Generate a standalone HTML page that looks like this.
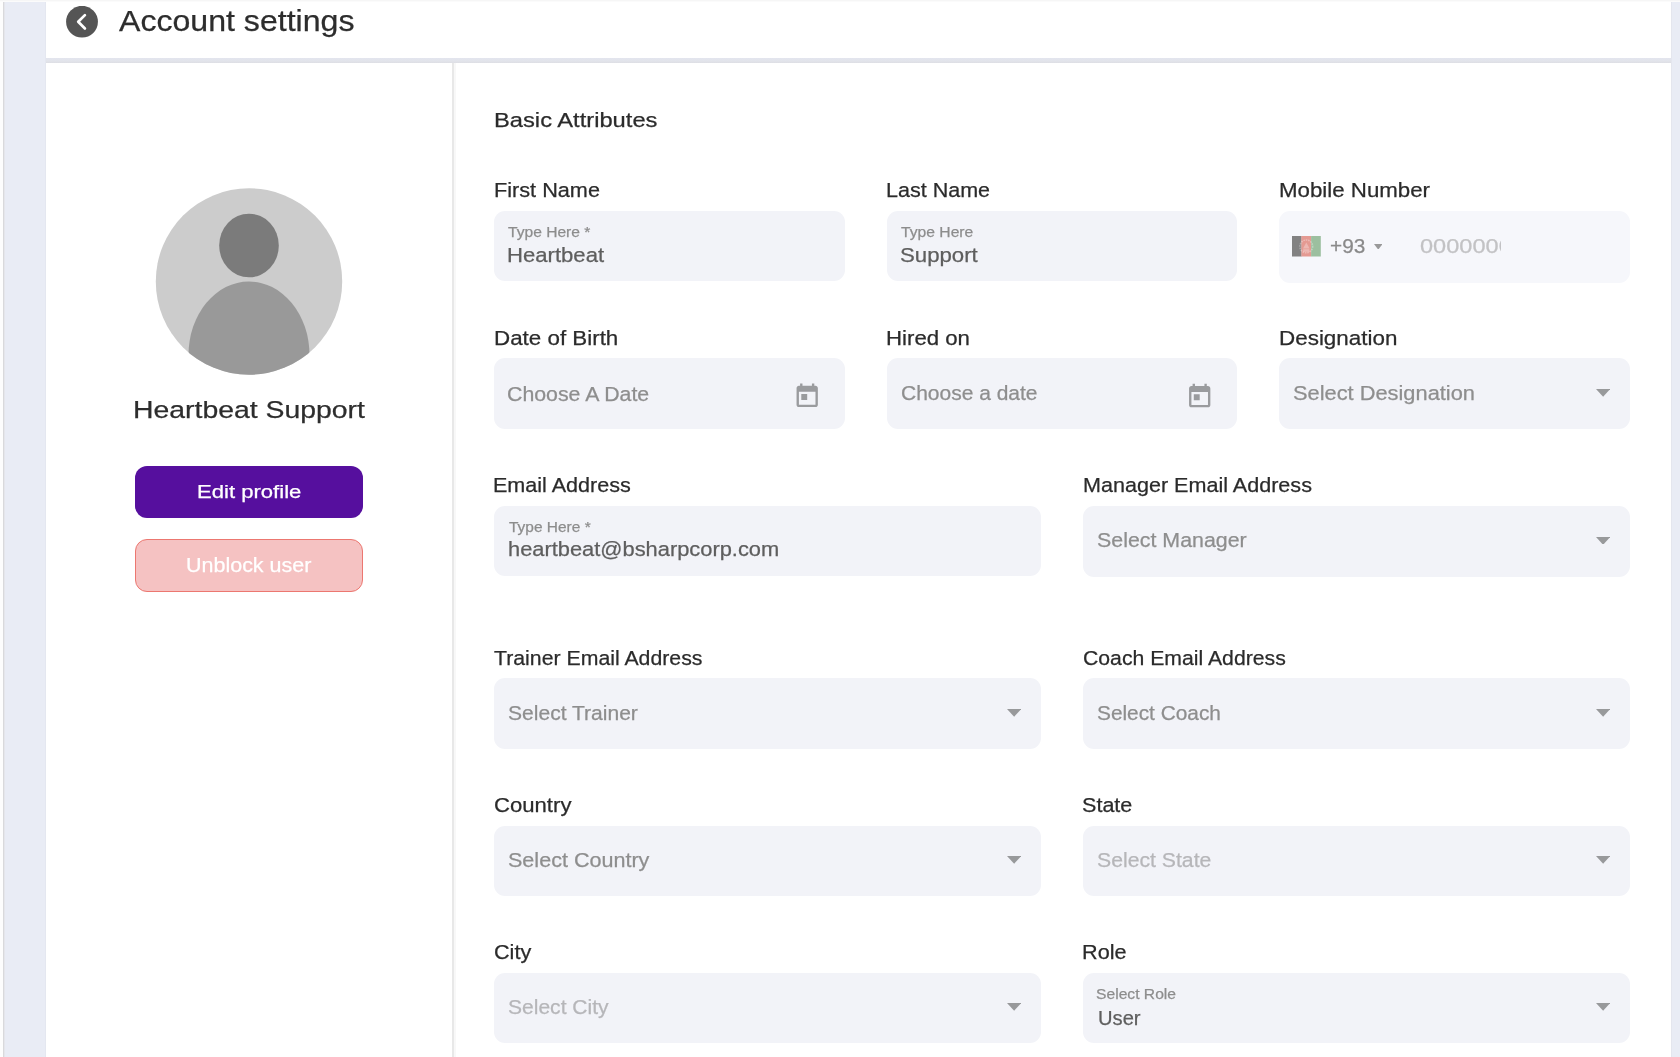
<!DOCTYPE html>
<html><head><meta charset="utf-8">
<style>
*{box-sizing:border-box;margin:0;padding:0}
html,body{width:1680px;height:1057px;overflow:hidden}
body{position:relative;background:#e9ecf5;font-family:"Liberation Sans",sans-serif;color:#2b2b2b}
.abs{position:absolute}
.t{position:absolute;white-space:nowrap;line-height:1;transform-origin:0 0;will-change:transform;-webkit-text-stroke:0.25px currentColor}
.box{position:absolute;border-radius:11px}
</style></head><body>
<div class="abs" style="left:0;top:0;width:3px;height:1057px;background:#fdfdfd"></div>
<div class="abs" style="left:3px;top:0;width:1px;height:1057px;background:#d9d9dc"></div><div class="abs" style="left:4px;top:0;width:1px;height:1057px;background:#e5e6eb"></div><div class="abs" style="left:45px;top:0;width:1px;height:1057px;background:#e4e7f0"></div><div class="abs" style="left:1671px;top:0;width:1px;height:1057px;background:#e4e6ee"></div>
<div class="abs" style="left:0;top:0;width:1680px;height:1px;background:#f6f6f6"></div><div class="abs" style="left:0;top:1px;width:1680px;height:1px;background:#fbfbfb"></div>
<div class="abs" style="left:46px;top:2px;width:1625px;height:56px;background:#fff"></div>
<div class="abs" style="left:46px;top:58px;width:1625px;height:5px;background:linear-gradient(#e3e5ee,#e2e4eb 60%,#dddee4)"></div>
<div class="abs" style="left:46px;top:63px;width:1625px;height:994px;background:#fff"></div>
<div class="abs" style="left:452px;top:63px;width:2px;height:994px;background:#e8e8e8"></div><div class="abs" style="left:454px;top:63px;width:2px;height:994px;background:#f8f8f8"></div>

<div class="box" style="left:494px;top:210.5px;width:350.7px;height:70px;background:#f2f3f8"></div>
<div class="box" style="left:886.7px;top:210.5px;width:350.6px;height:70px;background:#f2f3f8"></div>
<div class="box" style="left:1279.3px;top:210.8px;width:350.7px;height:71.8px;background:#f6f7fb"></div>
<div class="box" style="left:494px;top:358.4px;width:350.7px;height:71px;background:#f2f3f8"></div>
<div class="box" style="left:886.7px;top:358.4px;width:350.6px;height:71px;background:#f2f3f8"></div>
<div class="box" style="left:1279.3px;top:358.4px;width:350.7px;height:71.1px;background:#f2f3f8"></div>
<div class="box" style="left:494px;top:505.5px;width:547.0px;height:70.2px;background:#f2f3f8"></div>
<div class="box" style="left:1083px;top:505.5px;width:547.0px;height:71.5px;background:#f2f3f8"></div>
<div class="box" style="left:494px;top:678.2px;width:547.0px;height:70.6px;background:#f2f3f8"></div>
<div class="box" style="left:1083px;top:678.2px;width:547.0px;height:70.6px;background:#f2f3f8"></div>
<div class="box" style="left:494px;top:825.7px;width:547.0px;height:70.5px;background:#f2f3f8"></div>
<div class="box" style="left:1083px;top:825.7px;width:547.0px;height:70.5px;background:#f2f3f8"></div>
<div class="box" style="left:494px;top:972.7px;width:547.0px;height:70.2px;background:#f2f3f8"></div>
<div class="box" style="left:1083px;top:972.7px;width:547.0px;height:70.2px;background:#f2f3f8"></div>
<svg class="abs" style="left:1595.7px;top:389.3px" width="14.2" height="7.8" viewBox="0 0 14.2 7.8"><path d="M0 0H14.2L7.1 7.8Z" fill="#98999b"/></svg>
<svg class="abs" style="left:1595.7px;top:536.6px" width="14.2" height="7.8" viewBox="0 0 14.2 7.8"><path d="M0 0H14.2L7.1 7.8Z" fill="#98999b"/></svg>
<svg class="abs" style="left:1006.7px;top:708.9px" width="14.2" height="7.8" viewBox="0 0 14.2 7.8"><path d="M0 0H14.2L7.1 7.8Z" fill="#98999b"/></svg>
<svg class="abs" style="left:1595.7px;top:708.9px" width="14.2" height="7.8" viewBox="0 0 14.2 7.8"><path d="M0 0H14.2L7.1 7.8Z" fill="#98999b"/></svg>
<svg class="abs" style="left:1006.7px;top:856.4px" width="14.2" height="7.8" viewBox="0 0 14.2 7.8"><path d="M0 0H14.2L7.1 7.8Z" fill="#98999b"/></svg>
<svg class="abs" style="left:1595.7px;top:856.4px" width="14.2" height="7.8" viewBox="0 0 14.2 7.8"><path d="M0 0H14.2L7.1 7.8Z" fill="#98999b"/></svg>
<svg class="abs" style="left:1006.7px;top:1003.4px" width="14.2" height="7.8" viewBox="0 0 14.2 7.8"><path d="M0 0H14.2L7.1 7.8Z" fill="#98999b"/></svg>
<svg class="abs" style="left:1595.7px;top:1003.4px" width="14.2" height="7.8" viewBox="0 0 14.2 7.8"><path d="M0 0H14.2L7.1 7.8Z" fill="#98999b"/></svg>
<svg class="abs" style="left:793px;top:382px" width="32" height="32" viewBox="0 0 32 32"><g transform="translate(0.00 0.20) scale(1.1833)"><path fill="#9a9b9e" d="M19 3h-1V1h-2v2H8V1H6v2H5c-1.11 0-1.990.9-1.990 2L3 19c0 1.100.89 2 2 2h14c1.100 0 2-.9 2-2V5c0-1.100-.9-2-2-2zm0 16H5V8h14v11zM7 10h5v5H7z"/></g></svg>
<svg class="abs" style="left:1185px;top:382px" width="32" height="32" viewBox="0 0 32 32"><g transform="translate(0.50 0.50) scale(1.1833)"><path fill="#9a9b9e" d="M19 3h-1V1h-2v2H8V1H6v2H5c-1.11 0-1.990.9-1.990 2L3 19c0 1.100.89 2 2 2h14c1.100 0 2-.9 2-2V5c0-1.100-.9-2-2-2zm0 16H5V8h14v11zM7 10h5v5H7z"/></g></svg>
<div class="abs" style="left:1415px;top:230px;width:85.7px;height:30px;overflow:hidden"><div class="t" style="left:5.4px;top:5.99px;font-size:20.8px;color:#c2c2c4;transform:scaleX(1.133)">0000000</div></div>
<svg class="abs" style="left:66px;top:6px" width="32" height="32" viewBox="0 0 32 32">
<circle cx="16" cy="15.7" r="15.9" fill="#555"/>
<path d="M18.9 9.1 L12.2 15.8 L18.9 22.5" fill="none" stroke="#fff" stroke-width="2.7" stroke-linecap="round" stroke-linejoin="round"/>
</svg>
<svg class="abs" style="left:155px;top:188px" width="188" height="188" viewBox="0 0 188 188">
<defs><clipPath id="cc"><circle cx="94" cy="93.5" r="93.2"/></clipPath></defs>
<circle cx="94" cy="93.5" r="93.2" fill="#cccccc"/>
<g clip-path="url(#cc)">
<ellipse cx="94" cy="57.5" rx="29.8" ry="31.8" fill="#7b7b7b"/>
<ellipse cx="94" cy="167" rx="60.5" ry="73.5" fill="#999999"/>
</g>
</svg>
<div class="abs" style="left:135px;top:466.2px;width:228px;height:51.5px;background:#560f9e;border-radius:12px"></div>
<div class="abs" style="left:135px;top:538.5px;width:228px;height:53.5px;background:#f5c2c2;border:1.6px solid #ec7770;border-radius:12px"></div>
<svg class="abs" style="left:1292.1px;top:236.2px" width="28.8" height="20.5" viewBox="0 0 28.8 20.5">
<rect x="0" y="0" width="9.6" height="20.5" fill="#828282"/>
<rect x="9.4" y="0" width="9.8" height="20.5" fill="#e49a92"/>
<rect x="19.1" y="0" width="9.7" height="20.5" fill="#9cbf9f"/>
<circle cx="14.3" cy="10.4" r="6.4" fill="none" stroke="rgba(255,255,255,0.32)" stroke-width="1.5" stroke-dasharray="1.6 0.8"/>
<path d="M11 12.5 L14.3 6.5 L17.6 12.5 Z" fill="rgba(255,255,255,0.3)"/><rect x="11.2" y="13.2" width="6.2" height="2.6" fill="rgba(255,255,255,0.3)"/>
</svg>
<svg class="abs" style="left:1373.6px;top:243.6px" width="8.5" height="5.7" viewBox="0 0 8.5 5.7"><path d="M0 0H8.5L4.25 5.7Z" fill="#999"/></svg>

<div class="t" style="left:119.02px;top:6.51px;font-size:28.92px;color:#2d2d2d;transform:scaleX(1.1100)">Account settings</div>
<div class="t" style="left:133.18px;top:398.05px;font-size:24.71px;color:#2d2d2d;transform:scaleX(1.1485)">Heartbeat Support</div>
<div class="t" style="left:196.87px;top:482.92px;font-size:18.75px;color:#ffffff;transform:scaleX(1.1777)">Edit profile</div>
<div class="t" style="left:185.86px;top:555.94px;font-size:19.62px;color:#ffffff;transform:scaleX(1.0955)">Unblock user</div>
<div class="t" style="left:493.81px;top:109.92px;font-size:20.50px;color:#2b2b2b;transform:scaleX(1.1567)">Basic Attributes</div>
<div class="t" style="left:493.75px;top:179.52px;font-size:20.50px;color:#2b2b2b;transform:scaleX(1.0569)">First Name</div>
<div class="t" style="left:885.78px;top:179.52px;font-size:20.50px;color:#2b2b2b;transform:scaleX(1.0501)">Last Name</div>
<div class="t" style="left:1278.67px;top:179.52px;font-size:20.50px;color:#2b2b2b;transform:scaleX(1.0866)">Mobile Number</div>
<div class="t" style="left:493.65px;top:327.97px;font-size:20.50px;color:#2b2b2b;transform:scaleX(1.0907)">Date of Birth</div>
<div class="t" style="left:885.67px;top:327.97px;font-size:20.50px;color:#2b2b2b;transform:scaleX(1.0837)">Hired on</div>
<div class="t" style="left:1278.64px;top:327.97px;font-size:20.50px;color:#2b2b2b;transform:scaleX(1.0940)">Designation</div>
<div class="t" style="left:493.18px;top:474.77px;font-size:20.50px;color:#2b2b2b;transform:scaleX(1.0513)">Email Address</div>
<div class="t" style="left:1082.58px;top:474.77px;font-size:20.50px;color:#2b2b2b;transform:scaleX(1.0519)">Manager Email Address</div>
<div class="t" style="left:494.27px;top:648.04px;font-size:20.50px;color:#2b2b2b;transform:scaleX(1.0375)">Trainer Email Address</div>
<div class="t" style="left:1082.82px;top:648.34px;font-size:20.50px;color:#2b2b2b;transform:scaleX(1.0346)">Coach Email Address</div>
<div class="t" style="left:493.56px;top:795.19px;font-size:20.50px;color:#2b2b2b;transform:scaleX(1.0788)">Country</div>
<div class="t" style="left:1082.14px;top:795.19px;font-size:20.50px;color:#2b2b2b;transform:scaleX(1.0520)">State</div>
<div class="t" style="left:493.59px;top:941.74px;font-size:20.50px;color:#2b2b2b;transform:scaleX(1.0542)">City</div>
<div class="t" style="left:1081.75px;top:941.62px;font-size:20.50px;color:#2b2b2b;transform:scaleX(1.0560)">Role</div>
<div class="t" style="left:507.96px;top:224.83px;font-size:14.80px;color:#8d8d8d;transform:scaleX(1.0544)">Type Here *</div>
<div class="t" style="left:507.31px;top:245.77px;font-size:19.90px;color:#5e5e5e;transform:scaleX(1.1112)">Heartbeat</div>
<div class="t" style="left:901.16px;top:224.83px;font-size:14.80px;color:#8d8d8d;transform:scaleX(1.0587)">Type Here</div>
<div class="t" style="left:899.93px;top:246.00px;font-size:19.90px;color:#5e5e5e;transform:scaleX(1.1161)">Support</div>
<div class="t" style="left:1329.55px;top:236.00px;font-size:20.79px;color:#8a8a8a;transform:scaleX(0.9897)">+93</div>
<div class="t" style="left:507.23px;top:384.96px;font-size:19.90px;color:#8e8e8e;transform:scaleX(1.0716)">Choose A Date</div>
<div class="t" style="left:900.64px;top:384.30px;font-size:19.90px;color:#8e8e8e;transform:scaleX(1.0553)">Choose a date</div>
<div class="t" style="left:1292.75px;top:384.10px;font-size:19.90px;color:#8e8e8e;transform:scaleX(1.0971)">Select Designation</div>
<div class="t" style="left:508.56px;top:519.77px;font-size:14.80px;color:#8d8d8d;transform:scaleX(1.0452)">Type Here *</div>
<div class="t" style="left:508.23px;top:539.75px;font-size:19.90px;color:#5e5e5e;transform:scaleX(1.0985)">heartbeat@bsharpcorp.com</div>
<div class="t" style="left:1096.77px;top:531.15px;font-size:19.90px;color:#8e8e8e;transform:scaleX(1.0743)">Select Manager</div>
<div class="t" style="left:507.58px;top:704.30px;font-size:19.90px;color:#8e8e8e;transform:scaleX(1.0584)">Select Trainer</div>
<div class="t" style="left:1096.79px;top:704.30px;font-size:19.90px;color:#8e8e8e;transform:scaleX(1.0475)">Select Coach</div>
<div class="t" style="left:507.56px;top:851.30px;font-size:19.90px;color:#8e8e8e;transform:scaleX(1.0835)">Select Country</div>
<div class="t" style="left:1096.77px;top:851.30px;font-size:19.90px;color:#b6b6b9;transform:scaleX(1.0658)">Select State</div>
<div class="t" style="left:507.57px;top:998.10px;font-size:19.90px;color:#b6b6b9;transform:scaleX(1.0580)">Select City</div>
<div class="t" style="left:1095.96px;top:987.34px;font-size:14.80px;color:#8d8d8d;transform:scaleX(1.0580)">Select Role</div>
<div class="t" style="left:1097.54px;top:1008.85px;font-size:19.90px;color:#5e5e5e;transform:scaleX(1.0130)">User</div>
</body></html>
